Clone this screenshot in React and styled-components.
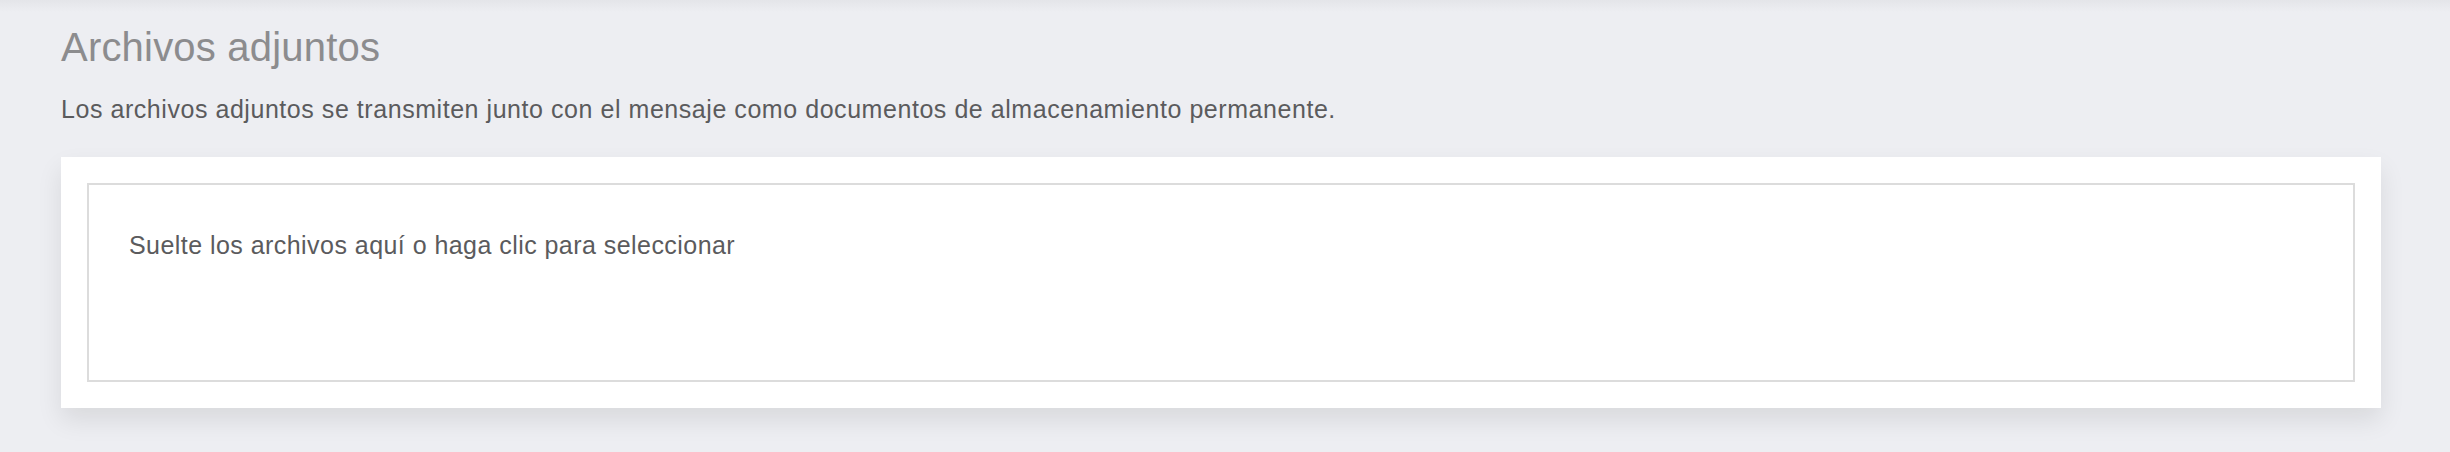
import React from "react";
import styled, { createGlobalStyle } from "styled-components";

const Global = createGlobalStyle`
  html, body { margin: 0; padding: 0; }
  body {
    background: #edeef2;
    font-family: "Liberation Sans", Arial, sans-serif;
  }
`;

const Page = styled.div`
  position: relative;
  min-height: 452px;
  box-sizing: border-box;
  padding: 23px 69px 0 61px;
  background: linear-gradient(to bottom, #e4e5e9 0px, #edeef2 12px);
`;

const Title = styled.h2`
  margin: 0;
  font-size: 40px;
  line-height: 48px;
  font-weight: 400;
  letter-spacing: 0.2px;
  color: #8c8c8e;
`;

const Lead = styled.p`
  margin: 24px 0 0;
  font-size: 25px;
  line-height: 29px;
  letter-spacing: 0.55px;
  color: #5b5b5d;
`;

const Card = styled.section`
  margin-top: 33px;
  background: #ffffff;
  padding: 26px;
  box-shadow: 0 12px 24px rgba(0, 0, 0, 0.09);
`;

const DropZone = styled.div`
  box-sizing: border-box;
  height: 199px;
  border: 2px solid #dcdcdc;
  padding: 46px 40px 0;
  font-size: 25px;
  line-height: 29px;
  letter-spacing: 0.45px;
  color: #5b5b5d;
  cursor: pointer;
`;

export default function App() {
  return (
    <>
      <Global />
      <Page>
        <Title>Archivos adjuntos</Title>
        <Lead>
          Los archivos adjuntos se transmiten junto con el mensaje como documentos de almacenamiento permanente.
        </Lead>
        <Card>
          <DropZone>Suelte los archivos aquí o haga clic para seleccionar</DropZone>
        </Card>
      </Page>
    </>
  );
}
